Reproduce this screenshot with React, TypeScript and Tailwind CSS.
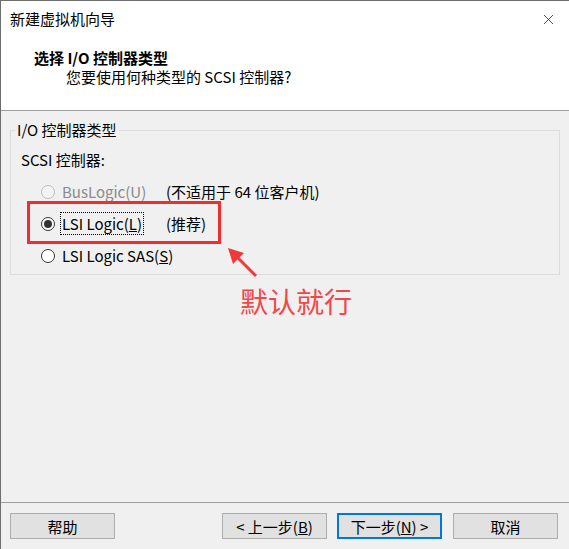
import { X } from "lucide-react";

const font = { fontFamily: '"Noto Sans CJK SC", "Noto Sans", sans-serif' };

function Radio({ checked, disabled }: { checked?: boolean; disabled?: boolean }) {
  return (
    <span
      className={
        "flex h-[14px] w-[14px] shrink-0 items-center justify-center rounded-full border " +
        (disabled ? "border-[#bcbcbc] bg-[#f4f4f4]" : "border-[#333333] bg-white")
      }
    >
      {checked && <span className="h-[8px] w-[8px] rounded-full bg-[#333333]" />}
    </span>
  );
}

function Btn({ children, primary }: { children: React.ReactNode; primary?: boolean }) {
  return (
    <button
      className={
        "flex h-[26px] w-[105px] items-center justify-center bg-[#e1e1e1] text-[15px] leading-none text-black " +
        (primary ? "border-2 border-[#0078d7]" : "border border-[#adadad]")
      }
    >
      {children}
    </button>
  );
}

export default function App() {
  return (
    <div
      className="relative flex h-[549px] w-[569px] flex-col overflow-hidden border-l border-t border-[#6e6e6e] bg-[#f0f0f0] text-black"
      style={font}
    >
      {/* header */}
      <div className="h-[110px] shrink-0 border-b border-[#a0a0a0] bg-white">
        <div className="flex h-[36px] items-start justify-between pl-[9px] pr-[12px] pt-[8px]">
          <span className="text-[15px] leading-[20px]">新建虚拟机向导</span>
          <X className="mt-[2px] h-[17px] w-[17px] text-[#222]" strokeWidth={1.1} />
        </div>
        <div className="pl-[33px] pt-[11px] text-[15px] font-bold leading-[19px]">选择 I/O 控制器类型</div>
        <div className="pl-[65px] text-[15px] leading-[20px]">您要使用何种类型的 SCSI 控制器?</div>
      </div>

      {/* options */}
      <fieldset className="mx-[9px] mt-[9px] h-[155px] border border-[#dcdcdc] p-0">
        <legend className="ml-[4px] px-[2px] text-[15px] leading-[20px]">I/O 控制器类型</legend>
        <div className="pl-[10px] pt-[10px] text-[15px] leading-[20px]">SCSI 控制器:</div>
        <div className="mt-[6px] flex flex-col pl-[30px] text-[15px] leading-[20px]">
          <div className="flex h-[32px] items-center">
            <Radio disabled />
            <span className="ml-[7px] w-[104px] text-[#8a8a8a]">BusLogic(U)</span>
            <span>(不适用于 64 位客户机)</span>
          </div>
          <div className="flex h-[32px] items-center">
            <Radio checked />
            <span className="ml-[5px] w-[106px]">
              <span className="border border-dotted border-black px-[1px]">
                LSI Logic(<span className="underline">L</span>)
              </span>
            </span>
            <span>(推荐)</span>
          </div>
          <div className="flex h-[32px] items-center">
            <Radio />
            <span className="ml-[7px]">
              LSI Logic SAS(<span className="underline">S</span>)
            </span>
          </div>
        </div>
      </fieldset>

      {/* annotation */}
      <div className="absolute left-[26px] top-[200px] h-[43px] w-[194px] border-[3px] border-[#ef2f2f]" />
      <svg className="absolute left-[222px] top-[242px]" width="40" height="40" viewBox="0 0 40 40">
        <line x1="33" y1="33" x2="12" y2="12" stroke="#f03a3a" strokeWidth="3" />
        <polygon points="5,5 21,10 10,21" fill="#f03a3a" />
      </svg>
      <div className="absolute left-[239px] top-[283px] text-[28px] leading-[34px] text-[#f04848]">默认就行</div>

      <div className="flex-1" />

      {/* buttons */}
      <div className="flex h-[47px] shrink-0 items-start justify-between border-t border-[#a0a0a0] pl-[9px] pr-[11px] pt-[10px]">
        <Btn>帮助</Btn>
        <div className="flex gap-[10px]">
          <Btn>
            &lt; 上一步(<span className="underline">B</span>)
          </Btn>
          <Btn primary>
            下一步(<span className="underline">N</span>) &gt;
          </Btn>
          <div className="ml-[1px]">
            <Btn>取消</Btn>
          </div>
        </div>
      </div>
    </div>
  );
}
